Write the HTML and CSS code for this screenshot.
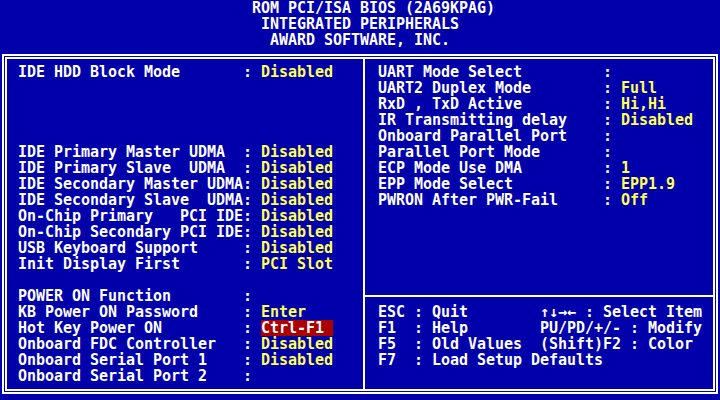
FILE: index.html
```html
<!DOCTYPE html>
<html lang="en">
<head>
    <meta charset="UTF-8">
    <title>Integrated Peripherals</title>
    <link rel="stylesheet" href="styles.css">
</head>
<body>
    <div class="screen">
        <header class="title">
            <div class="t1">ROM PCI/ISA BIOS (2A69KPAG)</div>
            <div class="t2">INTEGRATED PERIPHERALS</div>
            <div class="t3">AWARD SOFTWARE, INC.</div>
        </header>
        <main class="frame">
            <section class="panel left">
                <div class="group">
                    <div class="item"><span>IDE HDD Block Mode</span><span>:</span><span class="val">Disabled</span></div>
                </div>
                <div class="group skip4">
                    <div class="item"><span>IDE Primary Master UDMA</span><span>:</span><span class="val">Disabled</span></div>
                    <div class="item"><span>IDE Primary Slave  UDMA</span><span>:</span><span class="val">Disabled</span></div>
                    <div class="item"><span>IDE Secondary Master UDMA</span><span>:</span><span class="val">Disabled</span></div>
                    <div class="item"><span>IDE Secondary Slave  UDMA</span><span>:</span><span class="val">Disabled</span></div>
                    <div class="item"><span>On-Chip Primary   PCI IDE</span><span>:</span><span class="val">Disabled</span></div>
                    <div class="item"><span>On-Chip Secondary PCI IDE</span><span>:</span><span class="val">Disabled</span></div>
                    <div class="item"><span>USB Keyboard Support</span><span>:</span><span class="val">Disabled</span></div>
                    <div class="item"><span>Init Display First</span><span>:</span><span class="val">PCI Slot</span></div>
                </div>
                <div class="group skip1">
                    <div class="item"><span>POWER ON Function</span><span>:</span><span class="val"></span></div>
                    <div class="item"><span>KB Power ON Password</span><span>:</span><span class="val">Enter</span></div>
                    <div class="item"><span>Hot Key Power ON</span><span>:</span><span class="val selected">Ctrl-F1</span></div>
                    <div class="item"><span>Onboard FDC Controller</span><span>:</span><span class="val">Disabled</span></div>
                    <div class="item"><span>Onboard Serial Port 1</span><span>:</span><span class="val">Disabled</span></div>
                    <div class="item"><span>Onboard Serial Port 2</span><span>:</span><span class="val"></span></div>
                </div>
            </section>
            <section class="panel right">
                <div class="settings">
                    <div class="item"><span>UART Mode Select</span><span>:</span><span class="val"></span></div>
                    <div class="item"><span>UART2 Duplex Mode</span><span>:</span><span class="val">Full</span></div>
                    <div class="item"><span>RxD , TxD Active</span><span>:</span><span class="val">Hi,Hi</span></div>
                    <div class="item"><span>IR Transmitting delay</span><span>:</span><span class="val">Disabled</span></div>
                    <div class="item"><span>Onboard Parallel Port</span><span>:</span><span class="val"></span></div>
                    <div class="item"><span>Parallel Port Mode</span><span>:</span><span class="val"></span></div>
                    <div class="item"><span>ECP Mode Use DMA</span><span>:</span><span class="val">1</span></div>
                    <div class="item"><span>EPP Mode Select</span><span>:</span><span class="val">EPP1.9</span></div>
                    <div class="item"><span>PWRON After PWR-Fail</span><span>:</span><span class="val">Off</span></div>
                </div>
                <div class="help">
                    <div class="line"><span class="keys">ESC : Quit</span><span>↑↓→← : Select Item</span></div>
                    <div class="line"><span class="keys">F1  : Help</span><span>PU/PD/+/- : Modify</span></div>
                    <div class="line"><span class="keys">F5  : Old Values</span><span>(Shift)F2 : Color</span></div>
                    <div class="line"><span class="keys">F7  : Load Setup Defaults</span></div>
                </div>
            </section>
        </main>
    </div>
</body>
</html>
```

FILE: styles.css
```css
body {
    margin: 0;
    background-color: #0000aa;
}
.screen {
    width: 720px;
    height: 400px;
    overflow: hidden;
    background-color: #0000aa;
    color: #fff;
    font-family: "DejaVu Sans Mono", "Liberation Mono", monospace;
    font-weight: bold;
    font-size: 15px;
    line-height: 16px;
    letter-spacing: -0.03px;
}
.title div {
    white-space: pre;
}
.t1 {
    padding-left: 252px;
}
.t2 {
    padding-left: 261px;
}
.t3 {
    padding-left: 270px;
}
.frame {
    box-sizing: border-box;
    width: 716px;
    height: 340px;
    margin: 6px 0 0 2px;
    padding: 3px;
    border: 2px solid #fff;
    box-shadow: inset 0 0 0 1px #0000aa, inset 0 0 0 3px #fff;
    display: grid;
    grid-template-columns: 356px 350px;
}
.panel.left {
    padding: 5px 0 0 11px;
}
.panel.right {
    border-left: 2px solid #fff;
    display: flex;
    flex-direction: column;
}
.skip4 {
    margin-top: 64px;
}
.skip1 {
    margin-top: 16px;
}
.item {
    display: grid;
    grid-template-columns: 225px 18px auto;
    height: 16px;
    white-space: pre;
}
.val {
    color: #ffff55;
    justify-self: start;
}
.val.selected {
    width: 72px;
    background-color: #aa0000;
    color: #fff;
}
.settings {
    height: 231px;
    padding: 5px 0 0 13px;
    border-bottom: 2px solid #fff;
}
.help {
    padding: 7px 0 0 13px;
}
.line {
    display: flex;
    white-space: pre;
    height: 16px;
}
.keys {
    width: 153px;
    flex-shrink: 0;
}
.line .keys + span {
    margin-left: 9px;
}
```
